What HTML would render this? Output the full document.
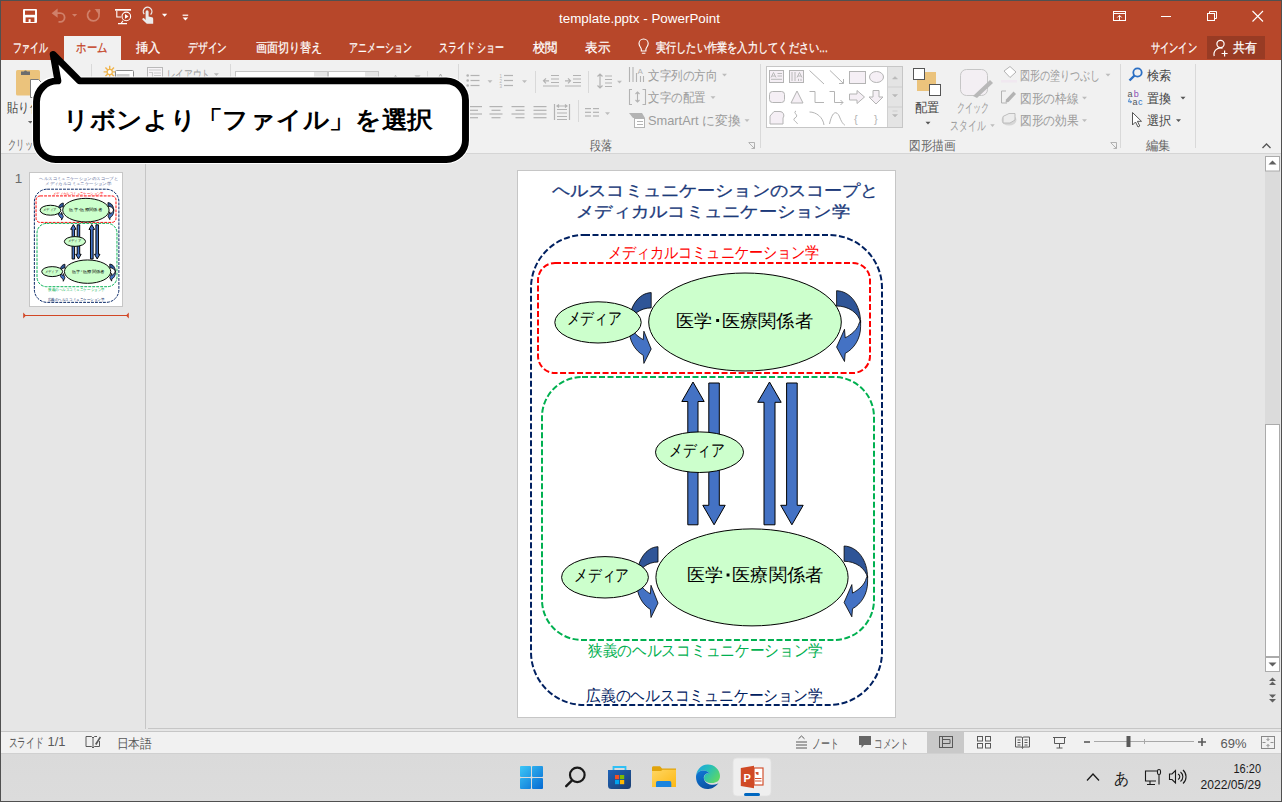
<!DOCTYPE html>
<html><head><meta charset="utf-8"><style>
html,body{margin:0;padding:0;width:1282px;height:802px;overflow:hidden;background:#E6E6E6}
svg{display:block;font-family:"Liberation Sans",sans-serif}
</style></head><body>
<svg width="1282" height="802" viewBox="0 0 1282 802">
<rect x="0" y="0" width="1282" height="802" fill="#E6E6E6"/>
<rect x="0" y="0" width="1282" height="60" fill="#B7472A"/>
<rect x="0" y="60" width="1282" height="93" fill="#F1F1F1"/>
<rect x="0" y="153" width="1282" height="1" fill="#D5D5D5"/>
<rect x="64" y="36" width="57" height="24" fill="#F1F1F1"/>
<rect x="0" y="731" width="1282" height="1" fill="#C6C6C6"/>
<rect x="0" y="732" width="1282" height="21" fill="#F1F1F1"/>
<defs><linearGradient id="tb" x1="0" y1="0" x2="0" y2="1"><stop offset="0" stop-color="#DADADA"/><stop offset="1" stop-color="#DCDCDC"/></linearGradient></defs>
<rect x="0" y="753" width="1282" height="48" fill="url(#tb)"/>
<rect x="0" y="753" width="1282" height="1" fill="#D0D0D0"/>
<rect x="16" y="70" width="24" height="25.5" rx="1.5" fill="#EBC37C"/>
<path d="M21 75 V71.5 H24 A1.6 1.6 0 0 1 27 71.5 H30 V75 Z" fill="#6D6D6D"/>
<path d="M30.5 79.5 H38.5 L42.5 83.5 V97.5 H30.5 Z" fill="#fff" stroke="#7A7A7A"/>
<text x="7" y="112.3" font-size="12.5" fill="#444444" textLength="45" lengthAdjust="spacingAndGlyphs">貼り付け</text>
<path d="M27.9 120.9 H32.9 L30.4 123.60000000000001 Z" fill="#666"/>
<text x="8" y="148.5" font-size="12.5" fill="#666666" textLength="58" lengthAdjust="spacingAndGlyphs">クリップボード</text>
<rect x="91" y="64" width="1" height="84" fill="#D9D9D9"/>
<g stroke="#F0B44C" stroke-width="1.4"><path d="M109.7 65.8 V78 M103.6 71.9 H115.8 M105.4 67.6 L114 76.2 M114 67.6 L105.4 76.2"/></g><circle cx="109.7" cy="71.9" r="2.6" fill="#fff" stroke="#F0B44C" stroke-width="1.2"/>
<rect x="115.5" y="70.5" width="18" height="12" rx="1" fill="#fff" stroke="#8A8A8A"/><rect x="116.5" y="74" width="13" height="8" fill="#CFCFCF"/>
<rect x="147.5" y="67.5" width="15" height="13" fill="#F7F4F7" stroke="#B9B9B9"/><path d="M149 70 H161 M149 72.5 H152.5 V80 M154 73 H161 M154 75.5 H161" stroke="#C9C9C9" stroke-width="1.2" fill="none"/>
<text x="166.5" y="78.5" font-size="12.5" fill="#9C9C9C" textLength="43.5" lengthAdjust="spacingAndGlyphs">レイアウト</text>
<path d="M213.9 73.3 H218.9 L216.4 76.0 Z" fill="#B9B9B9"/>
<rect x="230" y="64" width="1" height="84" fill="#D9D9D9"/>
<rect x="235.5" y="71.5" width="92" height="22" fill="#fff" stroke="#C6C6C6"/><rect x="314" y="72" width="13" height="21" fill="#E6E6E6"/>
<rect x="328.5" y="71.5" width="50" height="22" fill="#fff" stroke="#C6C6C6"/><rect x="365" y="72" width="13" height="21" fill="#E6E6E6"/>
<path d="M392.5 78.5 L395.5 75 L398.5 78.5 Z M414.5 75.5 H420.5 L417.5 79 Z" fill="#AAAAAA"/><path d="M437.5 80 L440.5 74 L443.5 80" fill="none" stroke="#AAAAAA"/>
<rect x="427" y="71" width="1" height="77" fill="#D9D9D9"/>
<rect x="458" y="64" width="1" height="84" fill="#D9D9D9"/>
<circle cx="467.7" cy="75.5" r="1.3" fill="#B3B3B3"/><rect x="470.5" y="74.9" width="9" height="1.2" fill="#B3B3B3"/><circle cx="467.7" cy="80.5" r="1.3" fill="#B3B3B3"/><rect x="470.5" y="79.9" width="9" height="1.2" fill="#B3B3B3"/><circle cx="467.7" cy="85.5" r="1.3" fill="#B3B3B3"/><rect x="470.5" y="84.9" width="9" height="1.2" fill="#B3B3B3"/>
<path d="M487.5 80.2 H492.5 L490 82.9 Z" fill="#BDBDBD"/>
<text x="499.5" y="77.7" font-size="4.5" fill="#B3B3B3">1</text><rect x="504" y="74.9" width="9" height="1.2" fill="#B3B3B3"/><text x="499.5" y="82.7" font-size="4.5" fill="#B3B3B3">2</text><rect x="504" y="79.9" width="9" height="1.2" fill="#B3B3B3"/><text x="499.5" y="87.7" font-size="4.5" fill="#B3B3B3">3</text><rect x="504" y="84.9" width="9" height="1.2" fill="#B3B3B3"/>
<path d="M522.0 80.2 H527.0 L524.5 82.9 Z" fill="#BDBDBD"/>
<rect x="535" y="71" width="1" height="22" fill="#D9D9D9"/>
<g fill="none" stroke="#B3B3B3" stroke-width="1.2"><path d="M551 75.5 H559 M551 79 H559 M551 82.5 H559 M543 86 H559 M543 75.5 H543 M549 80.8 H543.5 M546 78.3 L543.5 80.8 L546 83.3"/><path d="M573 75.5 H581 M573 79 H581 M573 82.5 H581 M565 86 H581 M565 80.8 H570.5 M568 78.3 L570.5 80.8 L568 83.3"/></g>
<rect x="588" y="71" width="1" height="22" fill="#D9D9D9"/>
<g fill="none" stroke="#B3B3B3" stroke-width="1.2"><path d="M600 74 V88 M597.5 76.5 L600 74 L602.5 76.5 M597.5 85.5 L600 88 L602.5 85.5 M605 76 H612 M605 79.5 H612 M605 83 H612 M605 86.5 H612"/></g>
<path d="M617.0 80.7 H622.0 L619.5 83.4 Z" fill="#BDBDBD"/>
<rect x="469" y="106.0" width="13" height="1.2" fill="#B3B3B3"/><rect x="469" y="109.7" width="9" height="1.2" fill="#B3B3B3"/><rect x="469" y="113.4" width="13" height="1.2" fill="#B3B3B3"/><rect x="469" y="117.1" width="9" height="1.2" fill="#B3B3B3"/>
<rect x="489.5" y="106.0" width="13" height="1.2" fill="#B3B3B3"/><rect x="491.5" y="109.7" width="9" height="1.2" fill="#B3B3B3"/><rect x="489.5" y="113.4" width="13" height="1.2" fill="#B3B3B3"/><rect x="491.5" y="117.1" width="9" height="1.2" fill="#B3B3B3"/>
<rect x="511.5" y="106.0" width="13" height="1.2" fill="#B3B3B3"/><rect x="515.5" y="109.7" width="9" height="1.2" fill="#B3B3B3"/><rect x="511.5" y="113.4" width="13" height="1.2" fill="#B3B3B3"/><rect x="515.5" y="117.1" width="9" height="1.2" fill="#B3B3B3"/>
<rect x="533.5" y="106.0" width="13" height="1.2" fill="#B3B3B3"/><rect x="533.5" y="109.7" width="13" height="1.2" fill="#B3B3B3"/><rect x="533.5" y="113.4" width="13" height="1.2" fill="#B3B3B3"/><rect x="533.5" y="117.1" width="13" height="1.2" fill="#B3B3B3"/>
<g fill="none" stroke="#B3B3B3" stroke-width="1.2"><path d="M554.5 104 V120 M569.5 104 V120 M557 106 H567 M559 104.5 L557 106 L559 107.5 M565 104.5 L567 106 L565 107.5 M557 109.5 H567 M557 113 H567 M557 116.5 H567 M557 119.5 H567"/></g>
<rect x="578" y="100" width="1" height="22" fill="#D9D9D9"/>
<rect x="585" y="108.0" width="6" height="1.2" fill="#B3B3B3"/><rect x="585" y="111.7" width="6" height="1.2" fill="#B3B3B3"/><rect x="585" y="115.4" width="6" height="1.2" fill="#B3B3B3"/><rect x="593" y="108.0" width="6" height="1.2" fill="#B3B3B3"/><rect x="593" y="111.7" width="6" height="1.2" fill="#B3B3B3"/><rect x="593" y="115.4" width="6" height="1.2" fill="#B3B3B3"/>
<path d="M605.0 112.2 H610.0 L607.5 114.9 Z" fill="#BDBDBD"/>
<g fill="none" stroke="#B3B3B3" stroke-width="1.1"><path d="M629.5 67 V82 M633 67 V82 M636.5 73 V82 M640.5 76 V82 M643.5 76 V82"/></g><text x="637.5" y="74" font-size="8" fill="#B3B3B3">A</text>
<text x="648" y="79.5" font-size="13" fill="#9C9C9C" textLength="69.5" lengthAdjust="spacingAndGlyphs">文字列の方向</text>
<path d="M722.0 73.7 H727.0 L724.5 76.4 Z" fill="#BDBDBD"/>
<g fill="none" stroke="#B3B3B3" stroke-width="1.1"><path d="M632 89.5 H629.5 V104.5 H632 M642.5 89.5 H645.5 V104.5 H642.5 M637.5 92 V102 M635.5 94 L637.5 92 L639.5 94 M635.5 100 L637.5 102 L639.5 100"/></g>
<text x="648" y="102.0" font-size="13" fill="#9C9C9C" textLength="57.5" lengthAdjust="spacingAndGlyphs">文字の配置</text>
<path d="M710.5 96.2 H715.5 L713 98.9 Z" fill="#BDBDBD"/>
<path d="M629 113 H642 L645 118 H633 Z" fill="#B3B3B3"/><rect x="634.5" y="118.5" width="10" height="9" fill="#fff" stroke="#B3B3B3"/><path d="M637 121.5 H643 M637 124.5 H643" stroke="#B3B3B3"/>
<text x="648" y="125.0" font-size="13" fill="#9C9C9C" textLength="92.5" lengthAdjust="spacingAndGlyphs">SmartArt に変換</text>
<path d="M744.5 119.2 H749.5 L747 121.9 Z" fill="#BDBDBD"/>
<text x="590" y="149.5" font-size="12.5" fill="#666666" textLength="22.5" lengthAdjust="spacingAndGlyphs">段落</text>
<path d="M748.5 142.5 H754.5 V148.5 M749 143 L754 148 M751.5 148.5 H754.5 V145.5" fill="none" stroke="#AAAAAA" stroke-width="0.9"/>
<rect x="760" y="64" width="1" height="84" fill="#D9D9D9"/>
<rect x="766.5" y="66.5" width="136" height="61" fill="#fff" stroke="#C6C6C6"/><rect x="888" y="67" width="14" height="60" fill="#E4E4E4"/>
<path d="M888 87 H902 M888 107 H902 M887.5 67 V127" stroke="#D0D0D0"/>
<path d="M892.5 79 L895 76.5 L897.5 79 Z M892.5 94.5 H897.5 L895 97 Z M892.5 114.5 H897.5 L895 117 Z M892.5 111 H897.5" fill="#B9B9B9" stroke="#B9B9B9" stroke-width="0.5"/>
<g fill="#F5EFF5" stroke="#B4B4B4" stroke-width="1"><rect x="769.5" y="70.5" width="14" height="12"/><rect x="789.5" y="70.5" width="14" height="12"/><path d="M809.5 70.5 L824 84" fill="none"/><path d="M830 70.5 L843.5 83.5 M843.5 79 V83.5 H839" fill="none"/><rect x="849.5" y="71.5" width="16" height="12"/><ellipse cx="876.5" cy="77" rx="7" ry="5.5"/><rect x="769.5" y="91.5" width="15" height="11" rx="3"/><path d="M791 103 L797 91 L803 103 Z"/><path d="M809.5 91.5 H815 V102.5 H824" fill="none"/><path d="M829.5 91.5 H834.5 V102.5 H843 M840.5 100 L843 102.5 L840.5 105" fill="none"/><path d="M849.5 94 H857 V90.5 L864.5 97 L857 103.5 V100 H849.5 Z"/><path d="M873 90.5 H879 V97 H883 L876 104 L869 97 H873 Z"/><path d="M770 124 V116 L774 111.5 H780 A4 4 0 0 1 783 118 V124 Z"/><path d="M796 111 C792 113 800 115 795 118 C791 120 799 123 797 124" fill="none"/><path d="M809.5 112 C816 112 823 117 824 125" fill="none"/><path d="M829.5 124 C833 108 838 112 840 118 C842 123 844 125 845 125" fill="none"/></g>
<g stroke="#B4B4B4" stroke-width="0.9" fill="none"><path d="M771 77.5 L773.5 72.5 L776 77.5 M772 76 H775 M777.5 73.5 H782 M777.5 76 H782 M771 79.3 H782"/><path d="M792 72 V81 M795 72 V81 M797 77.5 L799.5 72.5 L802 77.5 M798 76 H801 M798.5 78.8 V81 M801 78.8 V81"/></g>
<text x="854" y="123" font-size="11" fill="#B4B4B4">{</text><text x="874" y="123" font-size="11" fill="#B4B4B4">}</text>
<rect x="917" y="72" width="19" height="19" fill="#EBC37C"/><rect x="913.5" y="68.5" width="11" height="11" fill="#fff" stroke="#555"/><rect x="929.5" y="84.5" width="11" height="11" fill="#fff" stroke="#555"/>
<text x="915" y="112.0" font-size="12.5" fill="#444444" textLength="24.5" lengthAdjust="spacingAndGlyphs">配置</text>
<path d="M925.5 121.7 H930.5 L928 124.4 Z" fill="#555"/>
<rect x="960.5" y="69.5" width="27" height="26" rx="6" fill="#F3EFF3" stroke="#C6C6C6"/><path d="M973 96 L990 80 L993 83 L977 98 Z" fill="#B8B8B8"/>
<text x="957" y="112.0" font-size="12.5" fill="#9C9C9C" textLength="32.5" lengthAdjust="spacingAndGlyphs">クイック</text>
<text x="950" y="129.5" font-size="12.5" fill="#9C9C9C" textLength="35.5" lengthAdjust="spacingAndGlyphs">スタイル</text>
<path d="M990.25 124.2 H994.75 L992.5 126.9 Z" fill="#BDBDBD"/>
<path d="M1004 71 L1010 66.5 L1016 72 L1010 77.5 Z" fill="#fff" stroke="#B3B3B3"/><rect x="1001" y="80" width="16" height="2.5" fill="#F0E8F0"/>
<text x="1020" y="79.5" font-size="13" fill="#9C9C9C" textLength="80.5" lengthAdjust="spacingAndGlyphs">図形の塗りつぶし</text>
<path d="M1105.5 73.7 H1110.5 L1108 76.4 Z" fill="#BDBDBD"/>
<path d="M1006 91 H1001.5 V103 H1007" fill="none" stroke="#B3B3B3"/><path d="M1006 99.5 L1013.5 91.5 L1016 94 L1008.5 102 L1005.5 102.5 Z" fill="#B3B3B3"/>
<text x="1020" y="102.5" font-size="13" fill="#9C9C9C" textLength="58.5" lengthAdjust="spacingAndGlyphs">図形の枠線</text>
<path d="M1082.0 96.7 H1087.0 L1084.5 99.4 Z" fill="#BDBDBD"/>
<ellipse cx="1009" cy="120" rx="7.5" ry="5.5" fill="#D6D6D6"/><path d="M1003 116.5 L1009 113.5 H1015 V120 L1010 123 H1003 Z" fill="#ECECEC" stroke="#B3B3B3" stroke-width="0.8"/>
<text x="1020" y="125.0" font-size="13" fill="#9C9C9C" textLength="58.5" lengthAdjust="spacingAndGlyphs">図形の効果</text>
<path d="M1082.0 119.2 H1087.0 L1084.5 121.9 Z" fill="#BDBDBD"/>
<text x="909" y="149.5" font-size="12.5" fill="#666666" textLength="46.5" lengthAdjust="spacingAndGlyphs">図形描画</text>
<path d="M1110.5 142.5 H1116.5 V148.5 M1111 143 L1116 148 M1113.5 148.5 H1116.5 V145.5" fill="none" stroke="#AAAAAA" stroke-width="0.9"/>
<rect x="1120" y="64" width="1" height="84" fill="#D9D9D9"/>
<circle cx="1137.5" cy="72.5" r="4.2" fill="none" stroke="#2B6FC4" stroke-width="1.8"/><path d="M1134.5 75.5 L1129.5 80.5" stroke="#2B6FC4" stroke-width="2.4"/>
<text x="1147" y="79.5" font-size="12.5" fill="#444444" textLength="24.5" lengthAdjust="spacingAndGlyphs">検索</text>
<text x="1127.5" y="96.5" font-size="9" fill="#555">a</text><text x="1133.8" y="96.5" font-size="9" fill="#8A4FB5">b</text><text x="1132.5" y="104.5" font-size="9" fill="#555">a</text><text x="1138" y="104.5" font-size="9" fill="#2F76C8">c</text><path d="M1129.5 98.5 L1128.5 101.8 H1131.5 M1130.3 100.8 L1131.5 101.8 L1130.3 102.8" fill="none" stroke="#2F76C8" stroke-width="0.9"/>
<text x="1147" y="102.5" font-size="12.5" fill="#444444" textLength="24.5" lengthAdjust="spacingAndGlyphs">置換</text>
<path d="M1180.5 96.7 H1185.5 L1183 99.4 Z" fill="#555"/>
<path d="M1132.5 112.5 V125 L1135.5 122 L1138 127 L1139.8 126 L1137.4 121.3 H1141.5 Z" fill="#fff" stroke="#555" stroke-width="1"/>
<text x="1147" y="125.0" font-size="12.5" fill="#444444" textLength="24.5" lengthAdjust="spacingAndGlyphs">選択</text>
<path d="M1176.0 119.2 H1181.0 L1178.5 121.9 Z" fill="#555"/>
<text x="1146" y="149.5" font-size="12.5" fill="#666666" textLength="24.5" lengthAdjust="spacingAndGlyphs">編集</text>
<rect x="1195" y="64" width="1" height="84" fill="#D9D9D9"/>
<path d="M1262.5 148 L1266.5 144 L1270.5 148" fill="none" stroke="#555" stroke-width="1.3"/>
<rect x="145" y="154" width="1" height="575" fill="#C6C6C6"/>
<rect x="148" y="728" width="1134" height="1" fill="#C6C6C6"/>
<rect x="1265" y="156" width="15" height="516" fill="#DBDBDB"/>
<rect x="1265.5" y="156.5" width="14" height="14.5" fill="#fff" stroke="#ABABAB"/>
<path d="M1268.5 164.5 L1272.5 160.5 L1276.5 164.5 Z" fill="#606060"/>
<rect x="1265.5" y="424.5" width="14" height="232" fill="#fff" stroke="#ABABAB"/>
<rect x="1265.5" y="657.5" width="14" height="14" fill="#fff" stroke="#ABABAB"/>
<path d="M1268.5 662.5 L1272.5 666.5 L1276.5 662.5 Z" fill="#606060"/>
<path d="M1269 681 L1272.5 677.5 L1276 681 Z M1269 685 L1272.5 681.5 L1276 685 Z" fill="#606060"/>
<path d="M1269 694.5 L1272.5 698 L1276 694.5 Z M1269 699 L1272.5 702.5 L1276 699 Z" fill="#606060"/>
<rect x="517.5" y="170.5" width="378" height="547" fill="#fff" stroke="#C6C6C6"/>
<g><rect x="531" y="235" width="351" height="470" rx="53" fill="none" stroke="#002060" stroke-width="2.0" stroke-dasharray="6 2.5"/>
<rect x="538" y="263" width="332" height="110" rx="17" fill="none" stroke="#FF0000" stroke-width="2.0" stroke-dasharray="6 2.5"/>
<rect x="542" y="377" width="332" height="263" rx="40" fill="none" stroke="#00B050" stroke-width="2.0" stroke-dasharray="6 2.5"/>
<path d="M693,382 L704.2,401.5 L698,401.5 L698,524.8 L687.8,524.8 L687.8,401.5 L681.8,401.5 Z" fill="#4472C4" stroke="#000" stroke-width="1.0"/>
<path d="M714.1,524.8 L725.2,505.3 L719.3,505.3 L719.3,383 L708.8,383 L708.8,505.3 L702.8,505.3 Z" fill="#4472C4" stroke="#000" stroke-width="1.0"/>
<path d="M769.5,382 L781.2,402.3 L775,402.3 L775,524.8 L764,524.8 L764,402.3 L757.7,402.3 Z" fill="#4472C4" stroke="#000" stroke-width="1.0"/>
<path d="M791.9,524.8 L803.2,505.3 L797.2,505.3 L797.2,383 L786.6,383 L786.6,505.3 L780.7,505.3 Z" fill="#4472C4" stroke="#000" stroke-width="1.0"/>
<path d="M651.20,292.60 C638.57,293.10 629.00,306.60 629.00,324.60 C630.90,314.60 640.37,307.90 651.20,307.90 Z" fill="#2F5597" stroke="#000" stroke-width="0.8"/><path d="M629.00,322.60 L629.00,328.60 C629.00,340.60 634.96,350.60 643.26,355.30 L643.89,363.40 L651.20,349.00 L643.89,331.20 L643.26,339.70 C637.66,336.60 631.80,331.60 630.26,324.80 Z" fill="#4472C4" stroke="#000" stroke-width="0.8"/>
<path d="M836.60,290.70 C850.26,291.20 860.60,304.70 860.60,322.70 C858.55,312.70 848.31,306.00 836.60,306.00 Z" fill="#2F5597" stroke="#000" stroke-width="0.8"/><path d="M860.60,320.70 L860.60,326.70 C860.60,338.70 854.16,348.70 845.19,353.40 L844.50,361.50 L836.60,347.10 L844.50,329.30 L845.19,337.80 C851.23,334.70 857.58,329.70 859.23,322.90 Z" fill="#4472C4" stroke="#000" stroke-width="0.8"/>
<path d="M658.00,546.70 C645.88,547.20 636.70,560.70 636.70,578.70 C638.52,568.70 647.61,562.00 658.00,562.00 Z" fill="#2F5597" stroke="#000" stroke-width="0.8"/><path d="M636.70,576.70 L636.70,582.70 C636.70,594.70 642.41,604.70 650.38,609.40 L650.99,617.50 L658.00,603.10 L650.99,585.30 L650.38,593.80 C645.01,590.70 639.38,585.70 637.91,578.90 Z" fill="#4472C4" stroke="#000" stroke-width="0.8"/>
<path d="M844.10,546.00 C857.47,546.50 867.60,560.00 867.60,578.00 C865.59,568.00 855.56,561.30 844.10,561.30 Z" fill="#2F5597" stroke="#000" stroke-width="0.8"/><path d="M867.60,576.00 L867.60,582.00 C867.60,594.00 861.30,604.00 852.51,608.70 L851.84,616.80 L844.10,602.40 L851.84,584.60 L852.51,593.10 C858.43,590.00 864.64,585.00 866.26,578.20 Z" fill="#4472C4" stroke="#000" stroke-width="0.8"/>
<ellipse cx="598" cy="322.4" rx="43.2" ry="20.6" fill="#CCFFCC" stroke="#000" stroke-width="1.0"/>
<ellipse cx="745" cy="322" rx="96.3" ry="49" fill="#CCFFCC" stroke="#000" stroke-width="1.0"/>
<ellipse cx="699.5" cy="452.2" rx="44" ry="20.3" fill="#CCFFCC" stroke="#000" stroke-width="1.0"/>
<ellipse cx="605" cy="577.3" rx="43.4" ry="20.7" fill="#CCFFCC" stroke="#000" stroke-width="1.0"/>
<ellipse cx="752" cy="577.4" rx="96.1" ry="48.5" fill="#CCFFCC" stroke="#000" stroke-width="1.0"/>
<text x="552" y="196" font-size="16" fill="#1B3A7A" textLength="326.5" lengthAdjust="spacingAndGlyphs" stroke="#1B3A7A" stroke-width="0.3">ヘルスコミュニケーションのスコープと</text>
<text x="576" y="216.5" font-size="16" fill="#1B3A7A" textLength="274" lengthAdjust="spacingAndGlyphs" stroke="#1B3A7A" stroke-width="0.3">メディカルコミュニケーション学</text>
<text x="607.5" y="257.5" font-size="15.5" fill="#FF0000" textLength="212" lengthAdjust="spacingAndGlyphs">メディカルコミュニケーション学</text>
<text x="588" y="655.8" font-size="15.5" fill="#00B050" textLength="235" lengthAdjust="spacingAndGlyphs">狭義のヘルスコミュニケーション学</text>
<text x="586" y="700.5" font-size="15.5" fill="#002060" textLength="236.5" lengthAdjust="spacingAndGlyphs">広義のヘルスコミュニケーション学</text>
<text x="566.5" y="324.2" font-size="17" fill="#000" textLength="55" lengthAdjust="spacingAndGlyphs">メディア</text>
<text x="669.3" y="455.7" font-size="17" fill="#000" textLength="55" lengthAdjust="spacingAndGlyphs">メディア</text>
<text x="574.3" y="581.2" font-size="17" fill="#000" textLength="54.5" lengthAdjust="spacingAndGlyphs">メディア</text>
<text x="676.2" y="326.8" font-size="18" fill="#000" textLength="36" lengthAdjust="spacingAndGlyphs">医学</text><rect x="716.2" y="319" width="2.9" height="3" fill="#000"/><text x="721.8" y="326.8" font-size="18" fill="#000" textLength="91" lengthAdjust="spacingAndGlyphs">医療関係者</text>
<text x="686.6" y="581.3" font-size="18" fill="#000" textLength="36" lengthAdjust="spacingAndGlyphs">医学</text><rect x="726.6" y="573.5" width="2.9" height="3" fill="#000"/><text x="732.1999999999999" y="581.3" font-size="18" fill="#000" textLength="91" lengthAdjust="spacingAndGlyphs">医療関係者</text></g>
<rect x="29.5" y="172.5" width="93" height="134" fill="#fff" stroke="#C6C6C6"/>
<g transform="translate(-93.5,132.6) scale(0.2408)"><rect x="531" y="235" width="351" height="470" rx="53" fill="none" stroke="#002060" stroke-width="4.0" stroke-dasharray="12 4.5"/>
<rect x="538" y="263" width="332" height="110" rx="17" fill="none" stroke="#FF0000" stroke-width="4.0" stroke-dasharray="12 4.5"/>
<rect x="542" y="377" width="332" height="263" rx="40" fill="none" stroke="#00B050" stroke-width="4.0" stroke-dasharray="12 4.5"/>
<path d="M693,382 L704.2,401.5 L698,401.5 L698,524.8 L687.8,524.8 L687.8,401.5 L681.8,401.5 Z" fill="#4472C4" stroke="#000" stroke-width="4.0"/>
<path d="M714.1,524.8 L725.2,505.3 L719.3,505.3 L719.3,383 L708.8,383 L708.8,505.3 L702.8,505.3 Z" fill="#4472C4" stroke="#000" stroke-width="4.0"/>
<path d="M769.5,382 L781.2,402.3 L775,402.3 L775,524.8 L764,524.8 L764,402.3 L757.7,402.3 Z" fill="#4472C4" stroke="#000" stroke-width="4.0"/>
<path d="M791.9,524.8 L803.2,505.3 L797.2,505.3 L797.2,383 L786.6,383 L786.6,505.3 L780.7,505.3 Z" fill="#4472C4" stroke="#000" stroke-width="4.0"/>
<path d="M651.20,292.60 C638.57,293.10 629.00,306.60 629.00,324.60 C630.90,314.60 640.37,307.90 651.20,307.90 Z" fill="#2F5597" stroke="#000" stroke-width="3.2"/><path d="M629.00,322.60 L629.00,328.60 C629.00,340.60 634.96,350.60 643.26,355.30 L643.89,363.40 L651.20,349.00 L643.89,331.20 L643.26,339.70 C637.66,336.60 631.80,331.60 630.26,324.80 Z" fill="#4472C4" stroke="#000" stroke-width="3.2"/>
<path d="M836.60,290.70 C850.26,291.20 860.60,304.70 860.60,322.70 C858.55,312.70 848.31,306.00 836.60,306.00 Z" fill="#2F5597" stroke="#000" stroke-width="3.2"/><path d="M860.60,320.70 L860.60,326.70 C860.60,338.70 854.16,348.70 845.19,353.40 L844.50,361.50 L836.60,347.10 L844.50,329.30 L845.19,337.80 C851.23,334.70 857.58,329.70 859.23,322.90 Z" fill="#4472C4" stroke="#000" stroke-width="3.2"/>
<path d="M658.00,546.70 C645.88,547.20 636.70,560.70 636.70,578.70 C638.52,568.70 647.61,562.00 658.00,562.00 Z" fill="#2F5597" stroke="#000" stroke-width="3.2"/><path d="M636.70,576.70 L636.70,582.70 C636.70,594.70 642.41,604.70 650.38,609.40 L650.99,617.50 L658.00,603.10 L650.99,585.30 L650.38,593.80 C645.01,590.70 639.38,585.70 637.91,578.90 Z" fill="#4472C4" stroke="#000" stroke-width="3.2"/>
<path d="M844.10,546.00 C857.47,546.50 867.60,560.00 867.60,578.00 C865.59,568.00 855.56,561.30 844.10,561.30 Z" fill="#2F5597" stroke="#000" stroke-width="3.2"/><path d="M867.60,576.00 L867.60,582.00 C867.60,594.00 861.30,604.00 852.51,608.70 L851.84,616.80 L844.10,602.40 L851.84,584.60 L852.51,593.10 C858.43,590.00 864.64,585.00 866.26,578.20 Z" fill="#4472C4" stroke="#000" stroke-width="3.2"/>
<ellipse cx="598" cy="322.4" rx="43.2" ry="20.6" fill="#CCFFCC" stroke="#000" stroke-width="4.0"/>
<ellipse cx="745" cy="322" rx="96.3" ry="49" fill="#CCFFCC" stroke="#000" stroke-width="4.0"/>
<ellipse cx="699.5" cy="452.2" rx="44" ry="20.3" fill="#CCFFCC" stroke="#000" stroke-width="4.0"/>
<ellipse cx="605" cy="577.3" rx="43.4" ry="20.7" fill="#CCFFCC" stroke="#000" stroke-width="4.0"/>
<ellipse cx="752" cy="577.4" rx="96.1" ry="48.5" fill="#CCFFCC" stroke="#000" stroke-width="4.0"/>
<text x="552" y="196" font-size="16" fill="#7C88AE" textLength="326.5" lengthAdjust="spacingAndGlyphs" stroke="#7C88AE" stroke-width="0.3">ヘルスコミュニケーションのスコープと</text>
<text x="576" y="216.5" font-size="16" fill="#7C88AE" textLength="274" lengthAdjust="spacingAndGlyphs" stroke="#7C88AE" stroke-width="0.3">メディカルコミュニケーション学</text>
<text x="607.5" y="257.5" font-size="15.5" fill="#FF0000" textLength="212" lengthAdjust="spacingAndGlyphs">メディカルコミュニケーション学</text>
<text x="588" y="655.8" font-size="15.5" fill="#00B050" textLength="235" lengthAdjust="spacingAndGlyphs">狭義のヘルスコミュニケーション学</text>
<text x="586" y="700.5" font-size="15.5" fill="#002060" textLength="236.5" lengthAdjust="spacingAndGlyphs">広義のヘルスコミュニケーション学</text>
<text x="566.5" y="324.2" font-size="17" fill="#000" textLength="55" lengthAdjust="spacingAndGlyphs">メディア</text>
<text x="669.3" y="455.7" font-size="17" fill="#000" textLength="55" lengthAdjust="spacingAndGlyphs">メディア</text>
<text x="574.3" y="581.2" font-size="17" fill="#000" textLength="54.5" lengthAdjust="spacingAndGlyphs">メディア</text>
<text x="676.2" y="326.8" font-size="18" fill="#000" textLength="36" lengthAdjust="spacingAndGlyphs">医学</text><rect x="716.2" y="319" width="2.9" height="3" fill="#000"/><text x="721.8" y="326.8" font-size="18" fill="#000" textLength="91" lengthAdjust="spacingAndGlyphs">医療関係者</text>
<text x="686.6" y="581.3" font-size="18" fill="#000" textLength="36" lengthAdjust="spacingAndGlyphs">医学</text><rect x="726.6" y="573.5" width="2.9" height="3" fill="#000"/><text x="732.1999999999999" y="581.3" font-size="18" fill="#000" textLength="91" lengthAdjust="spacingAndGlyphs">医療関係者</text></g>
<text x="14.8" y="183" font-size="13.5" fill="#6A6A6A">1</text>
<path d="M24 315.5 H128" stroke="#D24726" stroke-width="1.2" fill="none"/><path d="M128.8 312.6 V318.4 L126 315.5 Z M23.2 312.6 V318.4 L26 315.5 Z" fill="#D24726"/>
<rect x="36.5" y="80.9" width="429" height="78.6" rx="19.2" fill="none" stroke="#fff" stroke-width="9"/><path d="M79.5 80.9 H446.3 A19.2 19.2 0 0 1 465.5 100.1 V140.3 A19.2 19.2 0 0 1 446.3 159.5 H55.7 A19.2 19.2 0 0 1 36.5 140.3 V102 A21 21 0 0 1 57.9 80.9 L53.2 54.4 Z" fill="#fff" stroke="#000" stroke-width="6.9" stroke-linejoin="round"/>
<text x="63" y="128.3" font-size="24" fill="#000" font-weight="bold" textLength="370" lengthAdjust="spacingAndGlyphs">リボンより「ファイル」を選択</text>
<rect x="23" y="9" width="14" height="14" rx="1" fill="#fff"/><rect x="25" y="10.6" width="10" height="4.2" fill="#B7472A"/><rect x="25.6" y="17.4" width="8.8" height="4.6" fill="#B7472A"/><rect x="28.6" y="19.2" width="2" height="2.8" fill="#fff"/>
<path d="M56.5 13.2 H60.3 A4.3 4.3 0 0 1 60.3 21.8 H58.5" fill="none" stroke="#D0806A" stroke-width="1.8"/><path d="M51.6 13.2 L57.6 8.6 V17.8 Z" fill="#D0806A"/>
<path d="M72 14 H77.2 L74.6 16.8 Z" fill="#D0806A"/>
<path d="M96.5 10.3 A5.8 5.8 0 1 1 90.3 10.2" fill="none" stroke="#D0806A" stroke-width="1.7"/><path d="M94.5 9 H100 V14.5 Z" fill="#D0806A"/>
<rect x="115" y="9" width="16" height="1.7" fill="#fff"/><path d="M116.8 10.7 V17 H121" fill="none" stroke="#fff" stroke-width="1.1"/><circle cx="126.3" cy="16.4" r="4.3" fill="none" stroke="#fff" stroke-width="1.1"/><path d="M125 14 L128.6 16.4 L125 18.8 Z" fill="#fff"/><path d="M118 23.6 H127 M121 23.6 L123 20.8" stroke="#fff" stroke-width="1.1" fill="none"/>
<path d="M145.6 20 V11.8 A1.5 1.5 0 0 1 148.6 11.8 V16.5 L152 17.3 A1.6 1.6 0 0 1 153.2 19 V23.8 H146.8 L142.3 19.6 A1.3 1.3 0 0 1 144.4 18.4 Z" fill="#EBEBEB"/><path d="M144.2 14.2 A4.3 4.3 0 1 1 150.6 14.6" fill="none" stroke="#EBEBEB" stroke-width="1.3"/>
<path d="M162 13.8 H167.2 L164.6 16.8 Z" fill="#fff"/>
<rect x="182.6" y="14.6" width="5.6" height="1.2" fill="#fff"/><path d="M182.6 17.4 H188.2 L185.4 20.6 Z" fill="#fff"/>
<text x="559" y="23.3" font-size="12.5" fill="#fff" textLength="161" lengthAdjust="spacingAndGlyphs">template.pptx - PowerPoint</text>
<rect x="1113.5" y="11.5" width="12" height="9" fill="none" stroke="#fff" stroke-width="1"/><path d="M1113.5 13.5 H1125.5 M1119.5 20 V15.5 M1117.3 17.5 L1119.5 15.3 L1121.7 17.5" fill="none" stroke="#fff" stroke-width="1"/>
<path d="M1161 16.5 H1171" stroke="#fff" stroke-width="1"/>
<rect x="1207.5" y="13.5" width="7" height="7" fill="none" stroke="#fff"/><path d="M1209.5 13.5 V11.5 H1216.5 V18.5 H1214.5" fill="none" stroke="#fff"/>
<path d="M1252.5 11 L1263 21.5 M1263 11 L1252.5 21.5" stroke="#fff" stroke-width="1.1"/>
<text x="12.5" y="52.4" font-size="12.8" fill="#fff" stroke="#fff" stroke-width="0.25" textLength="35.5" lengthAdjust="spacingAndGlyphs">ファイル</text>
<text x="135.5" y="52.4" font-size="12.8" fill="#fff" stroke="#fff" stroke-width="0.25" textLength="24.5" lengthAdjust="spacingAndGlyphs">挿入</text>
<text x="188.2" y="52.4" font-size="12.8" fill="#fff" stroke="#fff" stroke-width="0.25" textLength="38.80000000000001" lengthAdjust="spacingAndGlyphs">デザイン</text>
<text x="255.5" y="52.4" font-size="12.8" fill="#fff" stroke="#fff" stroke-width="0.25" textLength="66.19999999999999" lengthAdjust="spacingAndGlyphs">画面切り替え</text>
<text x="349.4" y="52.4" font-size="12.8" fill="#fff" stroke="#fff" stroke-width="0.25" textLength="62.60000000000002" lengthAdjust="spacingAndGlyphs">アニメーション</text>
<text x="438.9" y="52.4" font-size="12.8" fill="#fff" stroke="#fff" stroke-width="0.25" textLength="65.40000000000003" lengthAdjust="spacingAndGlyphs">スライド ショー</text>
<text x="532.5" y="52.4" font-size="12.8" fill="#fff" stroke="#fff" stroke-width="0.25" textLength="24.700000000000045" lengthAdjust="spacingAndGlyphs">校閲</text>
<text x="585" y="52.4" font-size="12.8" fill="#fff" stroke="#fff" stroke-width="0.25" textLength="25" lengthAdjust="spacingAndGlyphs">表示</text>
<text x="655.7" y="52.4" font-size="12.8" fill="#fff" stroke="#fff" stroke-width="0.25" textLength="172.0" lengthAdjust="spacingAndGlyphs">実行したい作業を入力してください...</text>
<text x="1150.5" y="52.4" font-size="12.8" fill="#fff" stroke="#fff" stroke-width="0.25" textLength="46.5" lengthAdjust="spacingAndGlyphs">サインイン</text>
<text x="76.2" y="52.4" font-size="12.8" fill="#C43E1C" stroke="#C43E1C" stroke-width="0.25" textLength="31.099999999999994" lengthAdjust="spacingAndGlyphs">ホーム</text>
<path d="M641.3 51 V49.2 C641.3 47.6 639 46.5 639 43.6 A4.6 4.6 0 0 1 648.2 43.6 C648.2 46.5 645.9 47.6 645.9 49.2 V51 Z M641.8 53.3 H645.4" fill="none" stroke="#fff" stroke-width="1.1"/>
<rect x="1207" y="36" width="58" height="23" fill="#983B24"/>
<circle cx="1220.5" cy="44" r="3.6" fill="none" stroke="#fff" stroke-width="1.2"/><path d="M1214.2 56 A6.5 6.5 0 0 1 1222.6 48.2" fill="none" stroke="#fff" stroke-width="1.2"/><path d="M1224.6 50.5 V56.5 M1221.6 53.5 H1227.6" stroke="#fff" stroke-width="1.2"/>
<text x="1232.5" y="52.4" font-size="12.8" fill="#fff" stroke="#fff" stroke-width="0.25" textLength="24.0" lengthAdjust="spacingAndGlyphs">共有</text>
<text x="8.5" y="747" font-size="12.5" fill="#595959" textLength="35.0" lengthAdjust="spacingAndGlyphs">スライド</text>
<text x="47.5" y="745.8" font-size="12" fill="#595959" textLength="18.0" lengthAdjust="spacingAndGlyphs">1/1</text>
<path d="M86 736.5 H91.5 L93 738 V748 L91.5 746.5 H86 Z" fill="none" stroke="#595959" stroke-width="1"/><path d="M93 738 L94.5 736.5 H97 M93 748 L94.5 746.5 H99.5 V741" fill="none" stroke="#595959"/><path d="M95 744 L99.8 736.5 L101 737.5 L96.5 745 Z" fill="#595959"/>
<text x="116.5" y="748" font-size="12.5" fill="#595959" textLength="35.5" lengthAdjust="spacingAndGlyphs">日本語</text>
<path d="M796 742 H807 M796 745 H807 M796 748 H807 M798.5 738.8 L801.5 736 L804.5 738.8" fill="none" stroke="#595959" stroke-width="1"/>
<text x="811.5" y="748" font-size="12.5" fill="#595959" textLength="27.0" lengthAdjust="spacingAndGlyphs">ノート</text>
<path d="M859 736 H871 V745 H864 L861.5 748 V745 H859 Z" fill="#666"/>
<text x="874" y="748" font-size="12.5" fill="#595959" textLength="34.5" lengthAdjust="spacingAndGlyphs">コメント</text>
<rect x="927" y="732" width="37" height="21" fill="#C9C9C9"/>
<rect x="939.5" y="736.5" width="13" height="11" fill="none" stroke="#595959"/><path d="M942.5 737 V747 M942.5 739.5 H950 V743.5 H942.5" fill="none" stroke="#595959"/>
<g fill="none" stroke="#595959"><rect x="977.5" y="736.5" width="5" height="4.5"/><rect x="985.5" y="736.5" width="5" height="4.5"/><rect x="977.5" y="743.5" width="5" height="4.5"/><rect x="985.5" y="743.5" width="5" height="4.5"/></g>
<g fill="none" stroke="#595959"><path d="M1015.5 737 H1021.8 L1022.5 738 L1023.2 737 H1029.5 V747 H1023.2 L1022.5 748.5 L1021.8 747 H1015.5 Z M1022.5 738 V747.5 M1017.5 740 H1020.5 M1017.5 742.5 H1020.5 M1017.5 745 H1020.5 M1024.5 740 H1027.5 M1024.5 742.5 H1027.5 M1024.5 745 H1027.5"/></g>
<g fill="none" stroke="#595959"><path d="M1053 737.5 H1066 M1054.5 737.5 V743.5 H1064.5 V737.5 M1059.5 743.5 V748 M1056.5 748 H1062.5"/></g>
<path d="M1084 742 H1090" stroke="#595959" stroke-width="1.6"/><rect x="1094" y="741" width="100" height="1" fill="#A8A8A8"/><rect x="1144" y="739" width="1" height="5" fill="#A8A8A8"/><rect x="1126.5" y="736" width="4" height="11" fill="#595959"/>
<path d="M1198 742 H1206 M1202 738 V746" stroke="#595959" stroke-width="1.6"/>
<text x="1220.5" y="748" font-size="13" fill="#595959" textLength="26.0" lengthAdjust="spacingAndGlyphs">69%</text>
<rect x="1261.5" y="736.5" width="13" height="12" fill="none" stroke="#888"/><path d="M1268 737.5 V740.5 M1266.5 739 L1268 740.5 L1269.5 739 M1268 747.5 V744.5 M1266.5 746 L1268 744.5 L1269.5 746 M1262.5 742.5 H1265.5 M1270.5 742.5 H1273.5" fill="none" stroke="#888" stroke-width="0.9"/>
<defs><linearGradient id="win" gradientUnits="userSpaceOnUse" x1="520" y1="766" x2="543" y2="789"><stop offset="0" stop-color="#3CC7F7"/><stop offset="1" stop-color="#0569D2"/></linearGradient><linearGradient id="store" x1="0" y1="0" x2="1" y2="1"><stop offset="0" stop-color="#1E63B8"/><stop offset="1" stop-color="#1B3E70"/></linearGradient><linearGradient id="fold" x1="0" y1="0" x2="1" y2="1"><stop offset="0" stop-color="#FFD663"/><stop offset="1" stop-color="#FDB813"/></linearGradient><linearGradient id="edge1" x1="0" y1="0" x2="1" y2="0.6"><stop offset="0" stop-color="#1BA1E8"/><stop offset="0.5" stop-color="#27BFB8"/><stop offset="1" stop-color="#5AD66A"/></linearGradient><linearGradient id="edge2" x1="0" y1="0" x2="0.6" y2="1"><stop offset="0" stop-color="#0F7AD8"/><stop offset="1" stop-color="#0B4FA0"/></linearGradient></defs>
<g fill="url(#win)"><rect x="520" y="766" width="11" height="11" rx="1"/><rect x="532" y="766" width="11" height="11" rx="1"/><rect x="520" y="778" width="11" height="11" rx="1"/><rect x="532" y="778" width="11" height="11" rx="1"/></g>
<circle cx="577.3" cy="774.9" r="7.3" fill="none" stroke="#1A1A1A" stroke-width="2.2"/><path d="M571.8 780.6 L566.2 786.2" stroke="#1A1A1A" stroke-width="2.4" stroke-linecap="round"/>
<path d="M613.5 771 V767 H625.5 V771" fill="none" stroke="#2FC0F5" stroke-width="1.8"/><path d="M608 770 H631 V785.5 A3.5 3.5 0 0 1 627.5 789 H611.5 A3.5 3.5 0 0 1 608 785.5 Z" fill="url(#store)"/><rect x="615" y="775" width="4.2" height="4.2" fill="#F25022"/><rect x="620" y="775" width="4.2" height="4.2" fill="#7FBA00"/><rect x="615" y="780" width="4.2" height="4.2" fill="#00A4EF"/><rect x="620" y="780" width="4.2" height="4.2" fill="#FFB900"/>
<path d="M652 768 A1.5 1.5 0 0 1 653.5 766.2 H660 L662 768.5 H676 V787 H652 Z" fill="#E1A40C"/><path d="M652 771 H661 L662.5 769.8 H676 V787 H652 Z" fill="url(#fold)"/><path d="M656 787 V783 A1.8 1.8 0 0 1 657.8 781 H669.5 A1.8 1.8 0 0 1 671.3 783 V787 Z" fill="#1A84DE"/>
<path d="M696 777 A12 12 0 0 1 720 776 C720 781 716 783 712 783 C707 783 704 781 704 778 C704 774 708 772 710 774 C706 768 696 770 696 777 Z" fill="url(#edge1)"/><path d="M696 777 C696 770 706 768 710 774 C707 772 703 775 704 779 C705 784 712 786 717 784 L718.5 783 C715 788 710 789 707.5 789 C700 789 696 783 696 777 Z" fill="url(#edge2)"/>
<rect x="733" y="758" width="38" height="38" rx="4" fill="#EFEFEF" stroke="#E2E2E2" stroke-width="0.8"/>
<rect x="754" y="768" width="9" height="17" fill="#fff" stroke="#D35230" stroke-width="1.2"/><path d="M755.5 772 A3 3 0 0 0 758.5 775 V772 Z" fill="#D35230"/><path d="M755 778.5 H761.5 M755 781 H761.5" stroke="#D35230" stroke-width="1"/>
<path d="M740.8 768 L754 765.8 V788.2 L740.8 786 Z" fill="#D04A25"/><text x="743.5" y="781.5" font-size="11" font-weight="bold" fill="#fff">P</text>
<rect x="744" y="793" width="16" height="3" rx="1.5" fill="#0067C0"/>
<path d="M1087 780.5 L1093 774 L1099 780.5" fill="none" stroke="#1A1A1A" stroke-width="1.3"/>
<text x="1113.5" y="783.5" font-size="16" fill="#1A1A1A" textLength="15.0" lengthAdjust="spacingAndGlyphs">あ</text>
<g fill="none" stroke="#1A1A1A" stroke-width="1.1"><path d="M1157 771 H1145.5 V781 H1156 M1150 781 V784 M1147 784.5 H1155"/><rect x="1157.5" y="769.5" width="3" height="5" rx="1.5"/><path d="M1159 774.5 V784.5"/></g>
<g fill="none" stroke="#1A1A1A" stroke-width="1.1"><path d="M1169.5 774 H1172 L1175.5 770.5 V783 L1172 779.5 H1169.5 Z M1178 774 A3 3 0 0 1 1178 779.5 M1180.5 772 A6 6 0 0 1 1180.5 781.5 M1183 770 A9 9 0 0 1 1183 783.5"/></g>
<text x="1233.5" y="773" font-size="12" fill="#1A1A1A" textLength="27.5" lengthAdjust="spacingAndGlyphs">16:20</text>
<text x="1200.5" y="789" font-size="12" fill="#1A1A1A" textLength="60.5" lengthAdjust="spacingAndGlyphs">2022/05/29</text>
<rect x="0" y="0" width="1282" height="1" fill="#505050"/>
<rect x="0" y="801" width="1282" height="1" fill="#505050"/>
<rect x="0" y="0" width="1" height="802" fill="#505050"/>
<rect x="1281" y="0" width="1" height="802" fill="#505050"/>
</svg>
</body></html>
